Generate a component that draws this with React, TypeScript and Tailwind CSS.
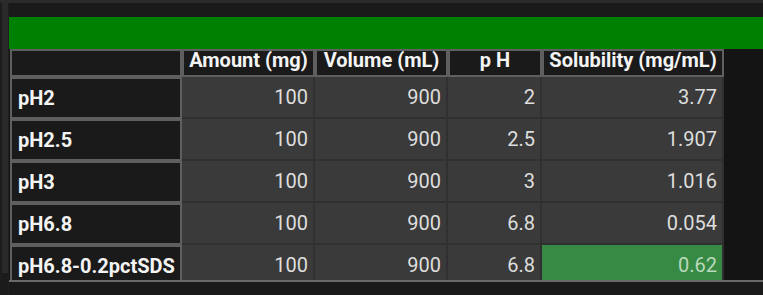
import React from "react";

const rows = [
  { label: "pH2", amount: "100", volume: "900", ph: "2", sol: "3.77", hi: false },
  { label: "pH2.5", amount: "100", volume: "900", ph: "2.5", sol: "1.907", hi: false },
  { label: "pH3", amount: "100", volume: "900", ph: "3", sol: "1.016", hi: false },
  { label: "pH6.8", amount: "100", volume: "900", ph: "6.8", sol: "0.054", hi: false },
  { label: "pH6.8-0.2pctSDS", amount: "100", volume: "900", ph: "6.8", sol: "0.62", hi: true },
];

const font = { fontFamily: "Roboto, 'Liberation Sans', sans-serif" };

function HeadCell({ w, children }: { w: string; children?: React.ReactNode }) {
  return (
    <div
      className={`${w} h-[28px] shrink-0 border-2 border-[#5f5f5f] bg-[#1a1a1a] flex justify-center items-start`}
    >
      <span className="text-[20px] leading-[18px] font-bold text-[#f4f4f4] whitespace-nowrap">
        {children}
      </span>
    </div>
  );
}

function DataCell({ w, children, hi }: { w: string; children: React.ReactNode; hi?: boolean }) {
  return (
    <div
      className={`${w} h-[42px] shrink-0 flex items-center justify-end pr-[5px] border-r-2 border-b-2 ${
        hi ? "bg-[#368a44] border-[#2f2f2f] text-[#b9d9bb]" : "bg-[#3a3a3a] border-[#303030] text-[#dedede]"
      } text-[20px] whitespace-nowrap`}
    >
      {children}
    </div>
  );
}

export default function App() {
  return (
    <div className="w-[763px] h-[295px] bg-[#1b1b1b] overflow-hidden flex flex-col" style={font}>
      <div className="h-[3px] bg-[#2b2b2b] shrink-0" />
      <div className="flex flex-1 min-h-0">
        <div className="w-[2px] bg-[#1c1c1c] shrink-0" />
        <div className="w-[6px] bg-[#2a2a2a] shrink-0 h-[270px]" />
        <div className="w-[1px] bg-[#1f1f1f] shrink-0" />
        <div className="flex-1 flex flex-col min-w-0">
          <div className="h-[14px] bg-[#1a1a1a] shrink-0" />
          <div className="h-[32px] bg-[#008000] shrink-0" />
          <div className="h-[231px] shrink-0 overflow-hidden flex bg-[#141414]">
            <div className="pl-[1px] flex flex-col">
              <div className="flex">
                <HeadCell w="w-[172px]" />
                <HeadCell w="w-[133px]">Amount (mg)</HeadCell>
                <HeadCell w="w-[133px]">Volume (mL)</HeadCell>
                <HeadCell w="w-[94px]">p H</HeadCell>
                <HeadCell w="w-[182px]">Solubility (mg/mL)</HeadCell>
              </div>
              {rows.map((r) => (
                <div key={r.label} className="flex">
                  <div className="w-[172px] h-[42px] shrink-0 border-2 border-[#5f5f5f] bg-[#1a1a1a] flex items-center pl-[6px]">
                    <span className="text-[20px] font-bold text-[#f4f4f4] whitespace-nowrap">{r.label}</span>
                  </div>
                  <DataCell w="w-[133px]">{r.amount}</DataCell>
                  <DataCell w="w-[133px]">{r.volume}</DataCell>
                  <DataCell w="w-[94px]">{r.ph}</DataCell>
                  <DataCell w="w-[182px]" hi={r.hi}>
                    {r.sol}
                  </DataCell>
                </div>
              ))}
            </div>
          </div>
          <div className="h-[2px] bg-[#6a6a6a] shrink-0" />
          <div className="flex-1 bg-[#1a1a1a]" />
        </div>
      </div>
    </div>
  );
}
